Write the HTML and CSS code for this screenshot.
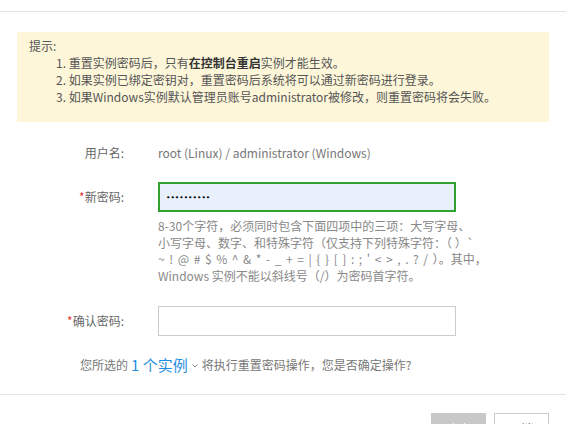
FILE: index.html
```html
<!DOCTYPE html>
<html lang="zh-CN">
<head>
<meta charset="utf-8">
<title>重置密码</title>
<link rel="stylesheet" href="styles.css">
</head>
<body>
<div class="dialog">
  <div class="header"></div>
  <div class="body">
    <div class="tip">
      <div class="tip-title">提示:</div>
      <ol class="tip-list">
        <li>1. 重置实例密码后，只有<b>在控制台重启</b>实例才能生效。</li>
        <li>2. 如果实例已绑定密钥对，重置密码后系统将可以通过新密码进行登录。</li>
        <li>3. 如果Windows实例默认管理员账号administrator被修改，则重置密码将会失败。</li>
      </ol>
    </div>
    <div class="form">
      <div class="row row-user">
        <div class="label">用户名:</div>
        <div class="value">root (Linux) / administrator (Windows)</div>
      </div>
      <div class="row row-pwd">
        <div class="label"><span class="req">*</span>新密码:</div>
        <div class="field">
          <div class="input input-active"><span class="dots">••••••••••</span></div>
          <div class="hint">8-30个字符，必须同时包含下面四项中的三项：大写字母、<br>小写字母、数字、和特殊字符（仅支持下列特殊字符：（ ）`<br><span class="chars">~ ! @ # $ % ^ &amp; * - _ + = | { } [ ] : ; ' &lt; &gt; , . ? / ）</span>。其中，<br>Windows 实例不能以斜线号（/）为密码首字符。</div>
        </div>
      </div>
      <div class="row row-confirm">
        <div class="label"><span class="req">*</span>确认密码:</div>
        <div class="field">
          <div class="input"></div>
        </div>
      </div>
      <div class="confirm-line"><span>您所选的</span><span class="link">1 个实例</span><svg class="chev" width="8" height="6" viewBox="0 0 8 6"><path d="M1.5 1.5 L4 4 L6.5 1.5" fill="none" stroke="#888" stroke-width="1"/></svg><span>将执行重置密码操作，您是否确定操作?</span></div>
    </div>
  </div>
  <div class="footer">
    <button class="btn btn-primary">确定</button>
    <button class="btn btn-default">取消</button>
  </div>
</div>
</body>
</html>
```
FILE: styles.css
```css
html, body {
  margin: 0;
  padding: 0;
  background: #fff;
}
body {
  font-family: "Noto Sans CJK SC", "Noto Sans", sans-serif;
  font-size: 12px;
  color: #666;
}
.header {
  height: 11px;
  border-bottom: 1px solid #e4e4e4;
}
.body {
  padding-top: 20px;
}
.tip {
  margin: 0 17px;
  background: #fdf6d9;
  box-sizing: border-box;
  height: 90px;
  padding: 5px 12px 0 12px;
  color: #555;
  line-height: 17px;
}
.tip-list {
  list-style: none;
  margin: 0;
  padding: 0 0 0 27px;
}
.tip-list b {
  color: #333;
}
.form {
  padding-top: 19px;
}
.row {
  display: flex;
  align-items: flex-start;
}
.label {
  width: 124px;
  text-align: right;
  padding-right: 34px;
  flex: none;
  color: #666;
}
.req {
  color: #e4393c;
}
.row-user {
  line-height: 24px;
  height: 24px;
}
.row-user .value {
  color: #777;
}
.row-pwd {
  margin-top: 17px;
}
.row-pwd .label,
.row-confirm .label {
  line-height: 30px;
}
.field {
  width: 298px;
}
.input {
  box-sizing: border-box;
  height: 30px;
  border: 1px solid #cccccc;
  background: #fff;
}
.input-active {
  border: 2px solid #2ea12e;
  background: #e8f0fe;
  display: flex;
  align-items: center;
  padding-left: 6px;
}
.dots {
  font-family: "DejaVu Sans", sans-serif;
  color: #000;
  font-size: 7.5px;
  letter-spacing: 0px;
}
.hint {
  margin-top: 6px;
  color: #888;
  line-height: 16.7px;
  white-space: nowrap;
}
.chars {
  word-spacing: 1.9px;
}
.row-confirm {
  margin-top: 21px;
}
.confirm-line {
  margin-top: 17px;
  padding-left: 80px;
  color: #777;
  height: 24px;
  display: flex;
  align-items: center;
  white-space: nowrap;
}
.link {
  color: #1f8ee0;
  font-size: 15px;
  margin-left: 3px;
}
.chev {
  margin: 2px 3px 0 3px;
}
.footer {
  margin-top: 17px;
  border-top: 1px solid #e4e4e4;
  display: flex;
  justify-content: flex-end;
  gap: 8px;
  padding: 18px 17px 0 0;
}
.btn {
  font-family: inherit;
  font-size: 12px;
  width: 55px;
  height: 31px;
  padding: 0;
  border-radius: 0;
  flex: none;
}
.btn-primary {
  background: #c8c8c8;
  border: 1px solid #c8c8c8;
  color: #fff;
}
.btn-default {
  background: #fff;
  border: 1px solid #cccccc;
  color: #555;
}
```
